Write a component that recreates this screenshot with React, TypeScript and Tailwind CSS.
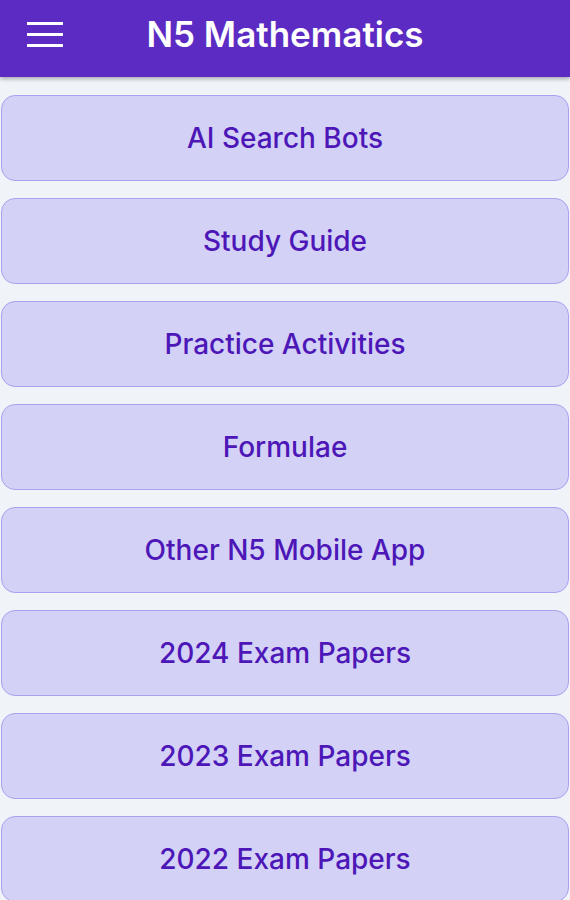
const items = [
  'AI Search Bots',
  'Study Guide',
  'Practice Activities',
  'Formulae',
  'Other N5 Mobile App',
  '2024 Exam Papers',
  '2023 Exam Papers',
  '2022 Exam Papers',
];

export default function App() {
  return (
    <div className="h-[900px] overflow-hidden bg-[#f0f3f8] font-['Inter',sans-serif]">
      <header className="relative z-10 flex h-[77px] items-center bg-[#5b2bc3] pb-[8px] shadow-[0_2px_4px_rgba(0,0,0,0.3)]">
        <button type="button" aria-label="Menu" className="ml-[27px] flex w-[36px] flex-col gap-[8px]">
          <span className="block h-[3px] w-full bg-white" />
          <span className="block h-[3px] w-full bg-white" />
          <span className="block h-[3px] w-full bg-white" />
        </button>
        <h1 className="pointer-events-none absolute left-0 right-0 top-[12px] text-center text-[35px] leading-[44px] font-semibold text-white">
          N5 Mathematics
        </h1>
      </header>

      <main className="flex flex-col gap-[17px] px-px pt-[18px]">
        {items.map((label) => (
          <button
            key={label}
            type="button"
            className="flex h-[86px] items-center justify-center rounded-[14px] border border-[#aba1f0] bg-[#d3d1f6] text-[28px] font-medium text-[#4d17b8]"
          >
            {label}
          </button>
        ))}
      </main>
    </div>
  );
}
